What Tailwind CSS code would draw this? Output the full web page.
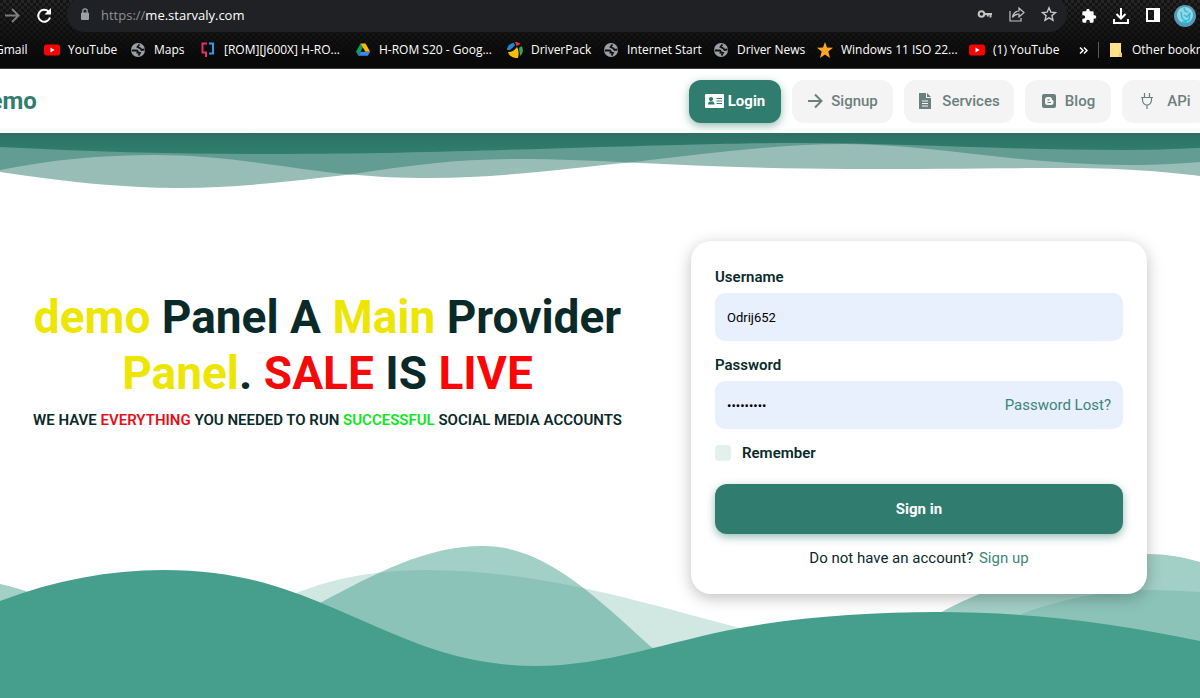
<!DOCTYPE html>
<html lang="en">
<head>
    <meta charset="UTF-8">
    <meta name="viewport" content="width=device-width, initial-scale=1.0">
    <title>demo Panel - Login</title>
    <script src="https://cdn.jsdelivr.net/npm/@tailwindcss/browser@4"></script>
</head>
<body class="min-h-screen flex flex-col overflow-x-hidden bg-white font-['Roboto',sans-serif] text-[#0a2a2a]">

    <!-- Browser chrome -->
    <div class="bg-[linear-gradient(to_bottom,transparent,#090909_58px),conic-gradient(#262626_25%,#141414_0_50%,#262626_0_75%,#141414_0)] bg-[size:100%_100%,6px_6px] font-['Open_Sans',sans-serif] text-white border-b border-[#3c3c3c] overflow-hidden">
        <div class="flex items-end h-8 -mr-px">
            <button aria-label="Forward" class="-ml-1 w-8 h-8 flex flex-none items-center justify-center text-[#7d7d7d]">
                <svg class="w-4 h-4" viewBox="0 0 16 16" fill="none" stroke="currentColor" stroke-width="2"><path d="M1 7.500h13M8 1l6.500 6.500L8 14"/></svg>
            </button>
            <button aria-label="Reload" class="w-8 h-8 flex flex-none items-center justify-center">
                <svg class="w-4 h-4" viewBox="0 0 16 16" fill="none" stroke="currentColor" stroke-width="2"><path d="M14 9.500A6 6 0 1 1 12.500 3.500"/><path d="M15 0v6.500H8.500z" fill="currentColor" stroke="none"/></svg>
            </button>
            <div class="ml-[7px] flex-1 h-9 pl-3 pr-[2px] flex items-center rounded-full bg-[#202124]">
                <svg class="w-3 h-3 mr-[10px]" viewBox="0 0 12 12"><rect x="2" y="4.500" width="8" height="7.500" rx="1" fill="#9aa0a6"/><path d="M3.800 5V3a2.200 2.200 0 0 1 4.400 0v2" fill="none" stroke="#9aa0a6" stroke-width="1.300"/></svg>
                <div class="flex-1 pt-[2px] text-[13px] leading-5"><span class="text-[#8e9196]">https://</span>me.starvaly.com</div>
                <button aria-label="Passwords" class="w-8 h-8 flex items-center justify-center text-[#c4c4c4]">
                    <svg class="w-4 h-4" viewBox="0 0 16 16" fill="none" stroke="currentColor" stroke-width="2"><circle cx="4.500" cy="8" r="2.800"/><path d="M7.500 8H15M13.500 8v3.500M10.800 8v2.500"/></svg>
                </button>
                <button aria-label="Share" class="w-8 h-8 flex items-center justify-center text-[#c4c4c4]">
                    <svg class="w-4 h-4" viewBox="0 0 16 16" fill="none" stroke="currentColor" stroke-width="1.200"><path d="M1 5v10h11v-3M3.500 11.500C4 8 6 5.500 10 5V2l5 4.500-5 4.500V8C7 8 5 9 3.500 11.500z"/></svg>
                </button>
                <button aria-label="Bookmark this page" class="w-8 h-8 flex items-center justify-center text-[#c4c4c4]">
                    <svg class="w-4 h-4" viewBox="0 0 16 16" fill="none" stroke="currentColor" stroke-width="1.400"><path d="M8 1.800l1.800 4.300 4.700.4-3.600 3.100 1.100 4.600L8 11.800l-4 2.400 1.100-4.600L1.500 6.500l4.700-.4z"/></svg>
                </button>
            </div>
            <div class="ml-[6px] flex flex-none">
                <button aria-label="Extensions" class="w-8 h-8 flex items-center justify-center">
                    <svg class="w-4 h-4" viewBox="0 0 24 24" fill="currentColor"><path d="M20.500 11H19V7a2 2 0 0 0-2-2h-4V3.500a2.500 2.500 0 0 0-5 0V5H4a2 2 0 0 0-2 2v3.800h1.500a2.700 2.700 0 0 1 0 5.400H2V20a2 2 0 0 0 2 2h3.800v-1.500a2.700 2.700 0 0 1 5.400 0V22H17a2 2 0 0 0 2-2v-4h1.500a2.500 2.500 0 0 0 0-5z"/></svg>
                </button>
                <button aria-label="Downloads" class="w-8 h-8 flex items-center justify-center">
                    <svg class="w-4 h-4" viewBox="0 0 16 16" fill="none" stroke="currentColor" stroke-width="2"><path d="M8 0v10M3.500 6L8 10.500 12.500 6M1 11v4h14v-4"/></svg>
                </button>
                <button aria-label="Side panel" class="w-8 h-8 flex items-center justify-center">
                    <svg class="w-4 h-4" viewBox="0 0 16 16"><path fill="currentColor" fill-rule="evenodd" d="M1 0h14v14H1zM3 2v10h6V2z"/></svg>
                </button>
                <button aria-label="Profile" class="w-8 h-8 flex items-center justify-center">
                    <svg class="w-[22px] h-[22px]" viewBox="0 0 22 22"><circle cx="11" cy="11" r="11" fill="#4f9dba"/><circle cx="11" cy="10" r="8" fill="#9fd0df"/><path d="M10 3l1 3 3 1M7 7l1 6 3 3 4-1 1-7-3 4-3-2M8 17h5" fill="none" stroke="#19c7e0" stroke-width="1.500"/></svg>
                </button>
            </div>
        </div>

        <!-- Bookmarks bar -->
        <nav aria-label="Bookmarks" class="grid grid-cols-[44px_86px_70px_155px_152px_96px_110px_104px_152px_110px_19px_11px_140px] items-center h-9 text-[12px] leading-4 whitespace-nowrap">
            <a href="#" class="-ml-[5px]">Gmail</a>
            <a href="#" class="flex items-center gap-2">
                <svg class="w-4 h-4 flex-none" viewBox="0 0 16 16"><rect y="2.500" width="16" height="11" rx="2.500" fill="#f00"/><path d="M6.500 5.500v5l4-2.500z" fill="#fff"/></svg>YouTube</a>
            <a href="#" class="flex items-center gap-2">
                <svg class="w-4 h-4 flex-none" viewBox="0 0 16 16"><circle cx="8" cy="8" r="7" fill="#9aa0a6"/><path d="M1.800 8.500h4.500c1.500 0 1.800 1 1.200 2l2.500.500-1.500 2.500M9.500 2.500L7.500 5l3 1.500 1 1.500 3-.500" fill="none" stroke="#111" stroke-width="1.800"/></svg>Maps</a>
            <a href="#" class="flex items-center gap-2">
                <svg class="w-4 h-4 flex-none" viewBox="0 0 16 16" fill="none" stroke-width="2"><path d="M7 1.500H2.500v9H6V15" stroke="#ea2e5f"/><path d="M9 1.500h4v10H9" stroke="#2d9fe0"/></svg>[ROM][J600X] H-RO...</a>
            <a href="#" class="flex items-center gap-2">
                <svg class="w-4 h-4 flex-none" viewBox="0 0 16 16"><path d="M5.500 1.500L1 9.500l2.300 4.200L8 5.600z" fill="#0f9d58"/><path d="M5.500 1.500h5l4.700 8.200h-4.800z" fill="#ffba00"/><path d="M5.600 9.700h9.600l-2.400 4H3.300z" fill="#4285f4"/></svg>H-ROM S20 - Goog...</a>
            <a href="#" class="flex items-center gap-2">
                <svg class="w-4 h-4 flex-none" viewBox="0 0 16 16"><path d="M0 8C0 4 3 1 7 1l1 2.500L3 8z" fill="#1e88d6"/><path d="M8 0c2 0 4 .500 5.500 2L9.500 4z" fill="#e53935"/><path d="M12 6l2.500-2c2 3 2 7-1.500 10z" fill="#34a853"/><path d="M1 10c4 0 7-2 9-5 2 3 2 7 1 11-5 0-9-2-10-6z" fill="#fbbc05"/></svg>DriverPack</a>
            <a href="#" class="flex items-center gap-2">
                <svg class="w-4 h-4 flex-none" viewBox="0 0 16 16"><circle cx="8" cy="8" r="7" fill="#9aa0a6"/><path d="M1.800 8.500h4.500c1.500 0 1.800 1 1.200 2l2.500.500-1.500 2.500M9.500 2.500L7.500 5l3 1.500 1 1.500 3-.500" fill="none" stroke="#111" stroke-width="1.800"/></svg>Internet Start</a>
            <a href="#" class="flex items-center gap-2">
                <svg class="w-4 h-4 flex-none" viewBox="0 0 16 16"><circle cx="8" cy="8" r="7" fill="#9aa0a6"/><path d="M1.800 8.500h4.500c1.500 0 1.800 1 1.200 2l2.500.500-1.500 2.500M9.500 2.500L7.500 5l3 1.500 1 1.500 3-.500" fill="none" stroke="#111" stroke-width="1.800"/></svg>Driver News</a>
            <a href="#" class="flex items-center gap-2">
                <svg class="w-4 h-4 flex-none" viewBox="0 0 16 16"><path d="M8 0l2 5.500 6 .3-4.700 3.700L13 16l-5-3.500L3 16l1.700-6.500L0 5.800l6-.3z" fill="#ffa726"/></svg>Windows 11 ISO 22...</a>
            <a href="#" class="flex items-center gap-2">
                <svg class="w-4 h-4 flex-none" viewBox="0 0 16 16"><rect y="2.500" width="16" height="11" rx="2.500" fill="#f00"/><path d="M6.500 5.500v5l4-2.500z" fill="#fff"/></svg>(1) YouTube</a>
            <button aria-label="More bookmarks" class="w-[9px]">
                <svg class="w-[9px] h-[9px]" viewBox="0 0 9 9" fill="none" stroke="currentColor" stroke-width="1.500"><path d="M1 1.500l3 3-3 3M5 1.500l3 3-3 3"/></svg>
            </button>
            <div class="w-px h-4 bg-[#5a5a5a]"></div>
            <a href="#" class="flex items-center gap-2">
                <svg class="w-[15px] h-4 flex-none" viewBox="0 0 15 16"><path d="M1 1h11v9l1 2v3H1z" fill="#ffe28a"/><path d="M10 11h3v4h-3z" fill="#f3cd5a"/></svg>Other bookmarks</a>
        </nav>
    </div>

    <!-- Site header -->
    <header class="flex items-center justify-between h-16 bg-white">
        <a href="#" class="-ml-6 text-[24px] leading-8 font-bold text-[#307c6e]">demo</a>
        <nav class="flex items-center gap-[11px] -mr-2 text-[15px] leading-6 font-medium text-[#6b807d]">
            <a href="#" class="flex items-center justify-center gap-1 w-[92px] h-[43px] rounded-xl bg-[#307c6e] font-bold text-white shadow-[0_3px_8px_#307c6e80]">
                <svg class="w-[19px] h-4" viewBox="0 0 19 16"><path fill="currentColor" fill-rule="evenodd" d="M1 1h17a1 1 0 0 1 1 1v12a1 1 0 0 1-1 1H1a1 1 0 0 1-1-1V2a1 1 0 0 1 1-1zM6 4a2 2 0 1 0 0 4.200A2 2 0 0 0 6 4zM3 11.500h6.500c0-2-1-3-2-3H5c-1 0-2 1-2 3zM11.500 5v1H17V5zM11.500 7.500v1H17v-1zM11.500 10v1H17v-1z"/></svg>Login</a>
            <a href="#" class="flex items-center justify-center gap-2 w-[101px] h-[43px] rounded-xl bg-[#f4f4f4]">
                <svg class="w-4 h-4" viewBox="0 0 16 16" fill="none" stroke="currentColor" stroke-width="2"><path d="M1 8h13M8 1.500L14.500 8 8 14.500"/></svg>Signup</a>
            <a href="#" class="flex items-center justify-center gap-2 w-[110px] h-[43px] rounded-xl bg-[#f4f4f4]">
                <svg class="w-4 h-4" viewBox="0 0 16 16"><path fill="currentColor" fill-rule="evenodd" d="M1 0h7v5h5v11H1zM9 0l4 4H9zM4 7.500v1h6v-1zM4 10v1h6v-1zM4 12.500v1h6v-1z"/></svg>Services</a>
            <a href="#" class="flex items-center justify-center gap-2 w-[86px] h-[43px] rounded-xl bg-[#f4f4f4]">
                <svg class="w-4 h-4" viewBox="0 0 16 16"><rect x="1" y="1" width="14" height="14" rx="2" fill="currentColor"/><path d="M6.500 4h2a2.500 2.500 0 0 1 2.500 2.500c0 .800 1.500.500 1.500 1.500v1.500A2.500 2.500 0 0 1 10 12H6.500A2.500 2.500 0 0 1 4 9.500v-3A2.500 2.500 0 0 1 6.500 4z" fill="#f4f4f4"/><path d="M6.500 6.800h2M6.500 9.500h3.500" stroke="currentColor" stroke-width="1.200"/></svg>Blog</a>
            <a href="#" class="flex items-center justify-center gap-3 w-[86px] h-[43px] rounded-xl bg-[#f4f4f4]">
                <svg class="w-4 h-4" viewBox="0 0 16 16" fill="none" stroke="currentColor" stroke-width="1.200"><path d="M5.500 0v4M10.500 0v4M2 4.500h12M3.500 4.500V7a4.500 5 0 0 0 9 0V4.500M8 12v4"/></svg>APi</a>
        </nav>
    </header>

    <!-- Hero -->
    <main class="relative flex-1 flex items-start pt-[108px] pr-[53px] pb-[104px]">
        <!-- top waves -->
        <svg class="absolute top-0 left-0 w-full h-[56px]" viewBox="0 0 1200 56" preserveAspectRatio="none">
            <defs>
                <linearGradient id="headerShade" x1="0" y1="0" x2="0" y2="1">
                    <stop offset="0" stop-color="#2c7163"/>
                    <stop offset="0.800" stop-color="#307c6e"/>
                </linearGradient>
            </defs>
            <path fill="#307c6e" fill-opacity="0.500" d="M0 0V39C60 48 120 55 180 55C240 55 300 47 350 41.500C410 32 460 26 515 26C560 26 600 28 630 29.500C700 33 770 36 850 36C930 36 1000 35 1060 35C1120 35 1160 38 1200 43V0Z"/>
            <path fill="#307c6e" fill-opacity="0.500" d="M0 0V37C50 27 100 22 155 22C230 22 290 36 350 41.500C380 44 400 45 430 45C500 45 570 35 630 29.500C710 20 780 11 845 11C930 11 1020 32 1130 32C1155 32 1175 31 1200 29V0Z"/>
            <path fill="url(#headerShade)" d="M0 0V14C90 19 180 21 270 21C400 21 500 17 600 14C680 12 740 10 800 10C900 10 1010 17 1120 17C1150 17 1175 16 1200 15V0Z"/>
        </svg>

        <!-- bottom waves -->
        <svg class="absolute bottom-0 left-0 w-full h-[152px]" viewBox="0 0 1200 152" preserveAspectRatio="none" fill="#469f8d">
            <path fill-opacity="0.250" d="M180 152C220 70 310 24 425 24C540 24 640 56 740 82L900 152ZM900 152C960 80 1060 44 1150 44C1167 44 1183 45 1200 46V152Z"/>
            <path fill-opacity="0.500" d="M0 38C10 40 20 43 28 46L100 152H0ZM240 152C285 80 300 68 320 57C375 28 425 0 483 0C540 0 585 40 650 100L720 152ZM870 152C895 90 930 68 982 47C1030 23 1080 8 1147 8C1167 8 1183 11 1200 16V152Z"/>
            <path d="M0 55C55 34 110 24 163 24C215 24 255 33 284 43C330 58 380 84 424 100C460 113 498 120 536 120C605 120 670 95 740 82C800 71 870 66 938 66C1030 66 1115 77 1200 95V152H0Z"/>
        </svg>

        <section class="relative flex-1 mt-12 pr-9 text-center">
            <h1 class="max-w-[600px] mx-auto text-[46px] leading-[56px] font-bold"><span class="text-[#ede604]">demo</span> Panel A <span class="text-[#ede604]">Main</span> Provider <span class="text-[#ede604]">Panel</span>. <span class="text-[#f30a0a]">SALE</span> IS <span class="text-[#fb0505]">LIVE</span></h1>
            <p class="mt-[7px] text-[15px] leading-6 font-semibold">WE HAVE <span class="text-[#e6101a]">EVERYTHING</span> YOU NEEDED TO RUN <span class="text-[#0be81e]">SUCCESSFUL</span> SOCIAL MEDIA ACCOUNTS</p>
        </section>

        <form class="relative w-[456px] flex-none p-6 rounded-[20px] bg-white text-[15px] leading-6 shadow-[0_4px_16px_#00000040]">
            <label for="username" class="block mb-1 font-semibold">Username</label>
            <input type="text" id="username" value="Odrij652" autocomplete="username" class="block w-full h-12 px-3 rounded-[10px] bg-[#e8effd] text-[13px] text-black">

            <label for="password" class="block mt-3 mb-1 font-semibold">Password</label>
            <div class="flex items-center h-12 px-3 rounded-[10px] bg-[#e8effd]">
                <input type="password" id="password" value="demopass1" autocomplete="current-password" class="flex-1 min-w-0 h-full text-[13px] text-black">
                <a href="#" class="text-[#3b8577]">Password Lost?</a>
            </div>

            <div class="flex items-center mt-3">
                <input type="checkbox" id="remember" class="appearance-none w-4 h-4 rounded-[4px] bg-[#e4f0ed] checked:bg-[#307c6e]">
                <label for="remember" class="ml-[11px] font-semibold">Remember</label>
            </div>

            <button type="submit" class="block w-full h-[50px] mt-[19px] rounded-xl bg-[#307c6e] font-bold text-white shadow-[0_3px_8px_#307c6e80]">Sign in</button>
            <p class="mt-3 text-center">Do not have an account? <a href="#" class="ml-[2px] text-[#3b8577]">Sign up</a></p>
        </form>
    </main>
</body>
</html>
